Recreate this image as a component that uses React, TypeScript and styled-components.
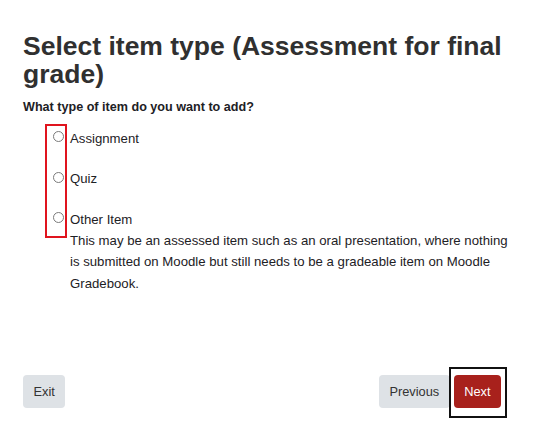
import React from 'react';
import styled, { createGlobalStyle } from 'styled-components';

const GlobalStyle = createGlobalStyle`
  html, body {
    margin: 0;
    padding: 0;
    background: #ffffff;
  }
  body {
    font-family: "Liberation Sans", Arial, sans-serif;
    color: #222;
  }
`;

const Page = styled.div`
  width: 541px;
  height: 424px;
  box-sizing: border-box;
  padding: 33px 23px 0 23px;
  display: flex;
  flex-direction: column;
`;

const Title = styled.h2`
  margin: 0;
  font-size: 26.5px;
  line-height: 27.5px;
  font-weight: bold;
  color: #303030;
`;

const Question = styled.p`
  margin: 9.5px 0 0;
  font-size: 12.6px;
  line-height: 18px;
  font-weight: bold;
  color: #1d2125;
`;

const Options = styled.div`
  position: relative;
  margin-top: 12px;
  padding-left: 30px;
  display: flex;
  flex-direction: column;
  gap: 19.5px;
`;

const Highlight = styled.div`
  position: absolute;
  left: 22px;
  top: -4px;
  width: 22px;
  height: 114px;
  box-sizing: border-box;
  border: 2px solid #e0141e;
  pointer-events: none;
`;

const Option = styled.label`
  display: grid;
  grid-template-columns: 11px 1fr;
  column-gap: 6px;
  align-items: start;
  font-size: 13.2px;
  line-height: 21px;
  color: #1d2125;
`;

const Radio = styled.span`
  width: 11px;
  height: 11px;
  margin-top: 3.5px;
  box-sizing: border-box;
  border: 1px solid #7a7a7a;
  border-radius: 50%;
  background: #fff;
`;

const Help = styled.span`
  grid-column: 2;
  display: block;
  line-height: 21.5px;
  padding-right: 8px;
`;

const Footer = styled.div`
  margin-top: auto;
  margin-bottom: 16px;
  margin-right: 17px;
  display: flex;
  align-items: center;
  gap: 4px;
`;

const Spacer = styled.div`
  flex: 1;
`;

const Button = styled.button<{ $primary?: boolean; $outlined?: boolean }>`
  position: relative;
  height: 33px;
  padding: 0 10.5px;
  border: none;
  border-radius: 4px;
  font-family: "Liberation Sans", Arial, sans-serif;
  font-size: 12.8px;
  background: ${(p) => (p.$primary ? '#a8211c' : '#dee2e6')};
  color: ${(p) => (p.$primary ? '#ffffff' : '#333')};

  ${(p) =>
    p.$outlined &&
    `
    &::after {
      content: '';
      position: absolute;
      top: -8px;
      bottom: -10px;
      left: -5px;
      right: -6px;
      border: 2px solid #111;
      pointer-events: none;
    }
  `}
`;

const items = [
  { label: 'Assignment' },
  { label: 'Quiz' },
  {
    label: 'Other Item',
    help:
      'This may be an assessed item such as an oral presentation, where nothing is submitted on Moodle but still needs to be a gradeable item on Moodle Gradebook.',
  },
];

export default function App() {
  return (
    <>
      <GlobalStyle />
      <Page>
        <Title>Select item type (Assessment for final grade)</Title>
        <Question>What type of item do you want to add?</Question>
        <Options>
          <Highlight />
          {items.map((item) => (
            <Option key={item.label}>
              <Radio />
              <span>{item.label}</span>
              {item.help && <Help>{item.help}</Help>}
            </Option>
          ))}
        </Options>
        <Footer>
          <Button>Exit</Button>
          <Spacer />
          <Button>Previous</Button>
          <Button $primary $outlined>
            Next
          </Button>
        </Footer>
      </Page>
    </>
  );
}
